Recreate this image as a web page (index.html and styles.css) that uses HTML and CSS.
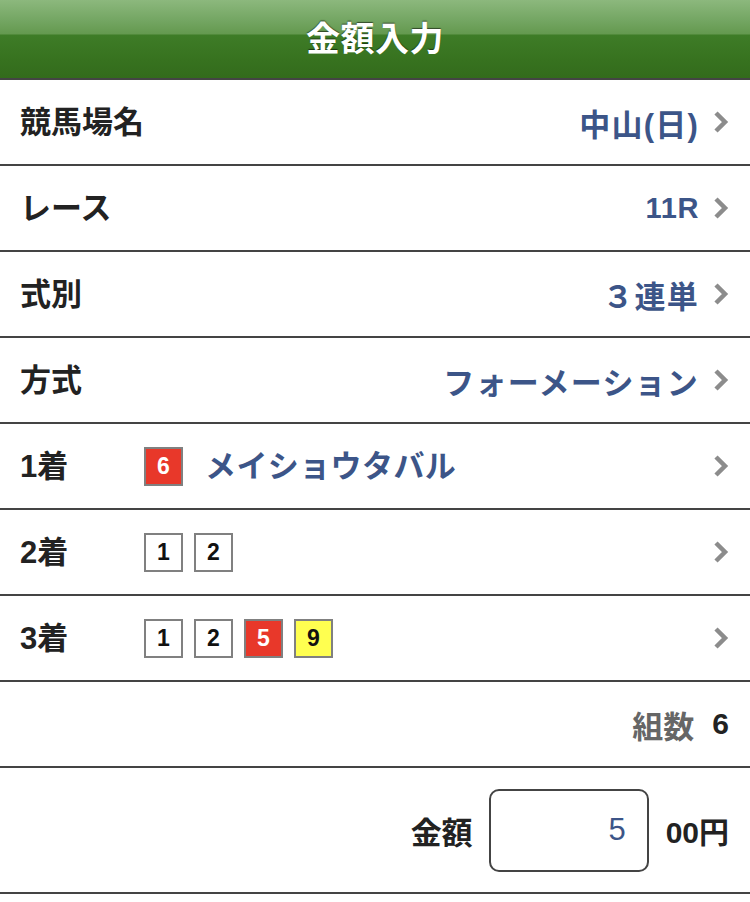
FILE: index.html
```html
<!DOCTYPE html>
<html lang="ja">
<head>
<meta charset="utf-8">
<title>金額入力</title>
<link rel="stylesheet" href="styles.css">
</head>
<body>
<header class="navbar"><h1 class="title">金額入力</h1></header>
<ul class="list">
  <li class="row">
    <span class="label">競馬場名</span>
    <span class="value">中山(日)</span>
    <svg class="chev" viewBox="0 0 16 24"><path d="M3 3 L12 12 L3 21" /></svg>
  </li>
  <li class="row">
    <span class="label">レース</span>
    <span class="value latin">11R</span>
    <svg class="chev" viewBox="0 0 16 24"><path d="M3 3 L12 12 L3 21" /></svg>
  </li>
  <li class="row">
    <span class="label">式別</span>
    <span class="value">３連単</span>
    <svg class="chev" viewBox="0 0 16 24"><path d="M3 3 L12 12 L3 21" /></svg>
  </li>
  <li class="row">
    <span class="label">方式</span>
    <span class="value">フォーメーション</span>
    <svg class="chev" viewBox="0 0 16 24"><path d="M3 3 L12 12 L3 21" /></svg>
  </li>
  <li class="row">
    <span class="label short">1着</span>
    <span class="picks">
      <span class="num red">6</span>
      <span class="horse">メイショウタバル</span>
    </span>
    <svg class="chev" viewBox="0 0 16 24"><path d="M3 3 L12 12 L3 21" /></svg>
  </li>
  <li class="row">
    <span class="label short">2着</span>
    <span class="picks">
      <span class="num">1</span>
      <span class="num">2</span>
    </span>
    <svg class="chev" viewBox="0 0 16 24"><path d="M3 3 L12 12 L3 21" /></svg>
  </li>
  <li class="row">
    <span class="label short">3着</span>
    <span class="picks">
      <span class="num">1</span>
      <span class="num">2</span>
      <span class="num red">5</span>
      <span class="num yellow">9</span>
    </span>
    <svg class="chev" viewBox="0 0 16 24"><path d="M3 3 L12 12 L3 21" /></svg>
  </li>
  <li class="row count-row">
    <span class="count-label">組数</span>
    <span class="count-val">6</span>
  </li>
  <li class="row amount-row">
    <span class="amount-label">金額</span>
    <span class="amount-box">5</span>
    <span class="amount-unit">00円</span>
  </li>
</ul>
</body>
</html>
```
FILE: styles.css
```css
* { box-sizing: border-box; }
html, body { margin: 0; padding: 0; background: #fff; }
body {
  font-family: "Liberation Sans", "Noto Sans CJK JP", sans-serif;
  color: #222;
}
.navbar {
  height: 80px;
  border-bottom: 2px solid #444;
  background: linear-gradient(to bottom, #8cb87d 0px, #74a663 20px, #64994f 34px, #3e7c27 35px, #37721f 60px, #336b1c 78px);
  display: flex;
  align-items: center;
  justify-content: center;
}
.title {
  margin: 0;
  font-family: "Noto Sans CJK JP", sans-serif;
  font-size: 34px;
  font-weight: 700;
  color: #fff;
  text-shadow: 0 -1px 1px rgba(0,0,0,0.55);
  letter-spacing: 0.5px;
  margin-top: -6px;
}
.list { list-style: none; margin: 0; padding: 0; }
.row {
  height: 86px;
  border-bottom: 2px solid #444;
  display: flex;
  align-items: center;
  padding: 0 21px 0 20px;
}
.label {
  font-family: "Noto Sans CJK JP", sans-serif;
  font-size: 31px;
  font-weight: 700;
  color: #222;
  margin-top: -5px;
}
.label.short {
  width: 124px;
  font-family: "Liberation Sans", "Noto Sans CJK JP", sans-serif;
}
.value {
  margin-left: auto;
  font-family: "Liberation Sans", "Noto Sans CJK JP", sans-serif;
  font-size: 31px;
  font-weight: 700;
  color: #3c5588;
  letter-spacing: 1.2px;
}
.value.latin { font-size: 29px; letter-spacing: 0.6px; }
.chev {
  width: 16px;
  height: 24px;
  margin-left: 14px;
  flex: none;
}
.chev path {
  fill: none;
  stroke: #8c8c8c;
  stroke-width: 4.5;
}
.picks {
  display: flex;
  align-items: center;
  gap: 11px;
  flex: 1;
}
.num {
  width: 39px;
  height: 39px;
  border: 2px solid #808080;
  display: flex;
  align-items: center;
  justify-content: center;
  font-family: "Liberation Sans", sans-serif;
  font-weight: 700;
  font-size: 23px;
  color: #111;
  background: #fff;
}
.num.red { background: #e8382a; color: #fff; }
.num.yellow { background: #ffff50; color: #111; }
.horse {
  margin-left: 11px;
  font-family: "Noto Sans CJK JP", sans-serif;
  font-size: 31px;
  font-weight: 700;
  color: #3c5588;
  letter-spacing: 0.4px;
  margin-top: -5px;
}
.count-row { justify-content: flex-end; }
.count-label {
  font-family: "Noto Sans CJK JP", sans-serif;
  font-size: 31px;
  font-weight: 700;
  color: #666;
}
.count-val {
  margin-left: 18px;
  font-size: 30px;
  font-weight: 700;
  color: #222;
}
.amount-row {
  height: 126px;
  justify-content: flex-end;
}
.amount-label {
  font-family: "Noto Sans CJK JP", sans-serif;
  font-size: 31px;
  font-weight: 700;
  color: #222;
}
.amount-box {
  margin-left: 16px;
  width: 160px;
  height: 83px;
  border: 2px solid #444;
  border-radius: 10px;
  display: flex;
  align-items: center;
  justify-content: flex-end;
  padding-right: 21px;
  font-size: 31px;
  color: #3c5588;
}
.amount-unit {
  margin-left: 17px;
  font-size: 30px;
  font-weight: 700;
  color: #222;
}
```
